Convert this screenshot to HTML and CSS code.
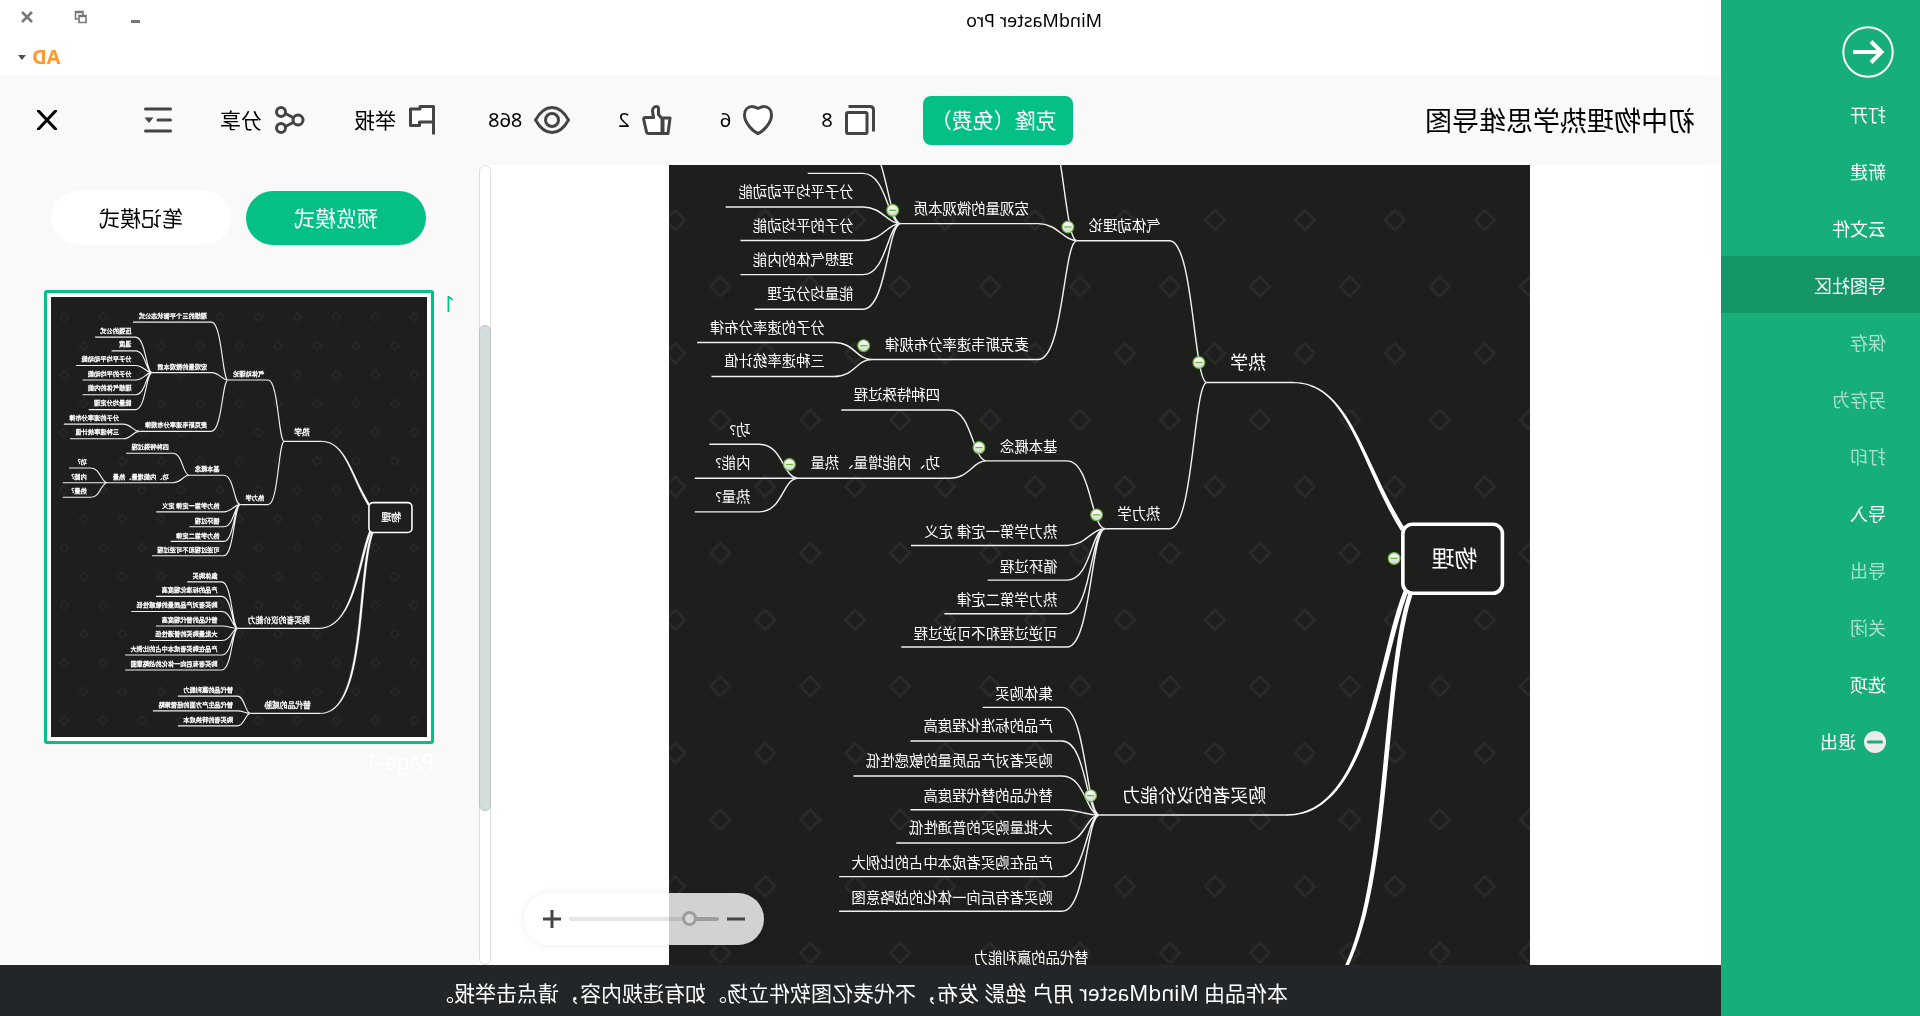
FILE: index.html
```html
<!DOCTYPE html>
<html lang="zh-CN">
<head>
<meta charset="utf-8">
<meta name="viewport" content="width=device-width, initial-scale=1">
<title>MindMaster Pro</title>
<link rel="stylesheet" href="styles.css">
</head>
<body>
<nav class="sidebar">
  <button class="back" type="button" aria-label="返回">
    <svg viewBox="0 0 52 52"><circle cx="26" cy="26" r="24.7"/><path class="arrow" d="M41 26H12M23 15.500L12.500 26L23 36.500"/></svg>
  </button>
  <ul class="menu">
    <li><a class="menu-item" href="#open">打开</a></li>
    <li><a class="menu-item" href="#new">新建</a></li>
    <li><a class="menu-item" href="#cloud">云文件</a></li>
    <li><a class="menu-item active" href="#community">导图社区</a></li>
    <li><a class="menu-item muted" href="#save">保存</a></li>
    <li><a class="menu-item muted" href="#saveas">另存为</a></li>
    <li><a class="menu-item muted" href="#print">打印</a></li>
    <li><a class="menu-item" href="#import">导入</a></li>
    <li><a class="menu-item muted" href="#export">导出</a></li>
    <li><a class="menu-item muted" href="#close">关闭</a></li>
    <li><a class="menu-item" href="#options">选项</a></li>
    <li><a class="menu-item" href="#exit"><svg class="exit-icon" viewBox="0 0 22 22"><circle cx="11" cy="11" r="11"/><path d="M4.500 11h13"/></svg>退出</a></li>
  </ul>
</nav>

<div class="main">
  <header class="titlebar">
    <h1 class="app-title">MindMaster Pro</h1>
    <div class="window-side">
      <div class="window-buttons">
        <button type="button" aria-label="最小化"><svg viewBox="0 0 14 14"><path d="M2 11.500h9" stroke-width="3"/></svg></button>
        <button type="button" aria-label="还原"><svg viewBox="0 0 14 14"><path d="M2 5.500h7v7h-7zM2 6.500h7M5 5V1.500h7.500V9H10M5 2.500h7" stroke-width="1.600"/></svg></button>
        <button type="button" aria-label="关闭窗口"><svg viewBox="0 0 14 14"><path d="M2 2l10 10M12 2L2 12" stroke-width="2.600"/></svg></button>
      </div>
      <button class="account" type="button">AD<svg viewBox="0 0 8 5"><path d="M0 0h8L4 5z"/></svg></button>
    </div>
  </header>

  <section class="toolbar">
    <h2 class="doc-title">初中物理热学思维导图</h2>
    <button class="clone" type="button">克隆（免费）</button>
    <button class="tool" type="button" aria-label="克隆数"><svg class="ic-30" viewBox="0 0 30 30"><rect class="paper" x="8" y="7.500" width="20.500" height="21" rx="1.500"/><path d="M26.500 1.500H5Q1.500 1.500 1.500 5V26.500"/></svg>8</button>
    <button class="tool" type="button" aria-label="喜欢"><svg class="ic-30" viewBox="0 0 30 30"><path class="paper" d="M15 28.500C10 26.500 1.500 18 1.500 10C1.500 4.500 5 1.500 9 1.500c2.500 0 4.500 1.200 6 2c1.500-.8 3.500-2 6-2c4 0 7.500 3 7.500 8.500C28.500 18 20 26.500 15 28.500z"/></svg>6</button>
    <button class="tool" type="button" aria-label="点赞"><svg class="ic-30" viewBox="0 0 30 30"><path class="paper" d="M10 13.500L13.500 9.500V4Q13.500 1.500 15.700 1.500C18 1.500 19.500 4 19.500 6L18.500 12.500H27Q28.700 12.700 28.300 14.500L25.500 27Q25 28.500 23.500 28.500H10zM2 13h7v15.500H4z"/></svg>2</button>
    <button class="tool" type="button" aria-label="浏览"><svg class="ic-36" viewBox="0 0 36 28"><path d="M1.500 14C6 6 11 1.500 18 1.500S30 6 34.500 14C30 22 25 26.500 18 26.500S6 22 1.500 14z"/><circle cx="18" cy="14" r="6.500"/></svg>868</button>
    <button class="tool named" type="button"><svg class="ic-32" viewBox="0 0 32 30"><path class="paper" d="M6.500 29.500V1.500H20V4H29.500V20.500H20.500V17H6.500"/></svg>举报</button>
    <button class="tool named" type="button"><svg class="ic-32" viewBox="0 0 32 28"><path d="M12 12L20.500 7.500M12 16L20.500 20.500"/><circle cx="8" cy="14" r="5"/><circle cx="25" cy="6" r="4.500"/><circle cx="25" cy="22" r="4.500"/></svg>分享</button>
    <button class="tool outline" type="button" aria-label="大纲"><svg class="ic-28" viewBox="0 0 28 28"><path d="M1.500 3h25M1.500 14H14M1.500 25h25"/><path class="solid" d="M18.500 11.500h9L23 17z"/></svg></button>
    <button class="tool close" type="button" aria-label="关闭"><svg class="ic-20" viewBox="0 0 20 20"><path d="M1.500 1l17 18M18.500 1l-17 18"/></svg></button>
  </section>

  <div class="workspace">
    <div class="stage">
      <svg class="map" viewBox="0 0 718 667" preserveAspectRatio="xMinYMin slice" role="img" aria-label="初中物理热学思维导图">
        <defs>
          <pattern id="dots" patternUnits="userSpaceOnUse" x="-281" y="-93" width="75" height="111.100"><path class="dot" d="M18.700 19.600l8.200 8.200l-8.200 8.200l-8.200-8.200zM56.200 75.100l8.200 8.200l-8.200 8.200l-8.200-8.200z"/></pattern>
          <pattern id="dots-small" patternUnits="userSpaceOnUse" x="0" y="-86" width="75" height="111.100"><path class="dot" d="M18.700 19.600l8.200 8.200l-8.200 8.200l-8.200-8.200zM56.200 75.100l8.200 8.200l-8.200 8.200l-8.200-8.200z"/></pattern>
          <linearGradient id="knob" x1="0" y1="0" x2="0" y2="1"><stop offset="0" stop-color="#fff"/><stop offset="1" stop-color="#cfdcc9"/></linearGradient>
          <g id="toggle"><circle r="4.900"/><path d="M-3 0h6"/></g>
          <g id="tree">
            <g class="trunk">
              <path d="M104.300 303C138.800 249.400 149.500 180.900 197.200 180.900V182C151 182 141.500 251 107.700 305z"/>
              <path d="M101.300 355C124 413 133.800 542.500 202.800 542.500V541.300C136.200 541.300 128 411 105.400 355z"/>
              <path d="M96.800 355C128 440 108 706.500 200 706.500V705.400C113 705.400 131.500 440 100.700 355z"/>
            </g>
            <rect class="root" x="23" y="299.500" width="83" height="57.500" rx="8"/>
            <g class="branch">
              <path d="M197 181.400H269.400M202 541.900H358.900M200 706H334.400"/>
              <path d="M269.400 181.400C280.500 181.400 280.500 63.100 300.500 63.100H377.800M269.400 181.400C280.500 181.400 280.500 303.300 300.500 303.300H354.200"/>
              <path d="M377.800 63.100C389 63.100 389-48.500 410-48.500H561M377.800 63.100C389 63.100 394 48.900 410 48.900H524.400M377.800 63.100C389 63.100 389 162.200 410 162.200H548.600"/>
              <path d="M524.400 48.900C536 48.900 536-19.500 556.400-19.500H634M524.400 48.900C536 48.900 536 7 556.400 7H602.200M524.400 48.900C536 48.900 540 35 556.400 35H670.600M524.400 48.900C536 48.900 540 63 556.400 63H658.300M524.400 48.900C536 48.900 536 91.400 556.400 91.400H658.300M524.400 48.900C536 48.900 536 120.300 556.400 120.300H646.400"/>
              <path d="M548.600 162.200C562 162.200 563 148 580.600 148H694.400M548.600 162.200C562 162.200 563 176.400 580.600 176.400H682.500"/>
              <path d="M354.200 303.300C366 303.300 366 246.700 386.100 246.700H452.800M354.200 303.300C366 303.300 370 317.200 386.100 317.200H516.100M354.200 303.300C366 303.300 366 346.100 386.100 346.100H452.200M354.200 303.300C366 303.300 366 374.200 386.100 374.200H488.300M354.200 303.300C366 303.300 366 401.900 386.100 401.900H524.200"/>
              <path d="M452.800 246.700C465 246.700 465 204.200 484.200 204.200H574.200M452.800 246.700C465 246.700 467 261.100 484.200 261.100H696.400M610.300 261.100C623 261.100 623 232.800 642.500 232.800H684.200M610.300 261.100C623 261.100 623 289.200 642.500 289.200H696.400"/>
              <path d="M358.900 541.900C370 541.900 370 452.200 390 452.200H456.300M358.900 541.900C370 541.900 370 480.300 390 480.300H516.500M358.900 541.900C370 541.900 371 509.400 390 509.400H564M358.900 541.900C373 541.900 375 537.500 390 537.500H516.500M358.900 541.900C370 541.900 371 565.300 390 565.300H528.400M358.900 541.900C370 541.900 370 593.300 390 593.300H576M358.900 541.900C370 541.900 370 622.200 390 622.200H576"/>
              <path d="M334.400 706C345 706 345 672.500 360 672.500H474.300M334.400 706C345 706 347 701 360 701H522.600M334.400 706C345 706 345 730 360 730H474.300"/>
            </g>
            <text class="t-root" x="44" y="335">物理</text>
            <g class="t-main">
              <text x="220" y="170">热学</text>
              <text x="220" y="531">购买者的议价能力</text>
              <text x="218" y="695">替代品的威胁</text>
            </g>
            <g class="t-sub">
              <text x="308" y="55">气体动理论</text>
              <text x="308" y="295">热力学</text>
              <text x="418" y="-56">理想的三个平衡状态公式</text>
              <text x="418" y="41">宏观量的微观本质</text>
              <text x="418" y="154">麦克斯韦速率分布规律</text>
              <text x="564" y="-27">压强的公式</text>
              <text x="564" y="-2">温度</text>
              <text x="564" y="27">分子平均平动动能</text>
              <text x="564" y="55">分子的平均动能</text>
              <text x="564" y="83">理想气体的内能</text>
              <text x="564" y="112">能量均分定理</text>
              <text x="588" y="140">分子的速率分布律</text>
              <text x="588" y="168">三种速率统计值</text>
              <text x="394" y="239">基本概念</text>
              <text x="492" y="196">四种特殊过程</text>
              <text x="492" y="253">功、内能增量、热量</text>
              <text x="650" y="225">功?</text>
              <text x="650" y="253">内能?</text>
              <text x="650" y="281">热量?</text>
              <text x="394" y="310">热力学第一定律 定义</text>
              <text x="394" y="339">循环过程</text>
              <text x="394" y="367">热力学第二定律</text>
              <text x="394" y="395">可逆过程和不可逆过程</text>
              <text x="398" y="445">集体购买</text>
              <text x="398" y="472">产品的标准化程度高</text>
              <text x="398" y="501">购买者对产品质量的敏感性低</text>
              <text x="398" y="530">替代品的替代程度高</text>
              <text x="398" y="557">大批量购买的普通性低</text>
              <text x="398" y="586">产品在购买者成本中占的比例大</text>
              <text x="398" y="615">购买者有后向一体化的战略意图</text>
              <text x="368" y="665">替代品的赢利能力</text>
              <text x="368" y="693">替代品生产方面的经营策略</text>
              <text x="368" y="722">购买者的转换成本</text>
            </g>
          </g>
        </defs>
        <rect class="ground" width="100%" height="100%"/>
        <rect fill="url(#dots)" width="100%" height="100%"/>
        <use href="#tree"/>
        <g class="toggles">
          <use href="#toggle" x="113.300" y="328"/>
          <use href="#toggle" x="276.100" y="164.700"/>
          <use href="#toggle" x="385.300" y="51.700"/>
          <use href="#toggle" x="361.400" y="291.700"/>
          <use href="#toggle" x="531.400" y="37.800"/>
          <use href="#toggle" x="555.600" y="150.600"/>
          <use href="#toggle" x="459.400" y="235.600"/>
          <use href="#toggle" x="617.500" y="249.700"/>
          <use href="#toggle" x="366.400" y="525.800"/>
        </g>
      </svg>
      <div class="zoom">
        <button type="button" aria-label="缩小"><svg viewBox="0 0 18 18"><path d="M0 9h18"/></svg></button>
        <input class="zoom-range" type="range" min="0" max="100" value="16" aria-label="缩放">
        <button type="button" aria-label="放大"><svg viewBox="0 0 18 18"><path d="M0 9h18M9 0v18"/></svg></button>
      </div>
    </div>
    <div class="scrollbar"><div class="scroll-thumb"></div></div>
    <aside class="pages">
      <div class="modes">
        <button class="mode selected" type="button">预览模式</button>
        <button class="mode" type="button">笔记模式</button>
      </div>
      <div class="page-entry">
        <span class="page-number">1</span>
        <figure class="page">
          <a class="thumb" href="#page-1" aria-label="Page-1">
            <svg viewBox="-6 -97 725 849">
              <rect class="ground" x="-6" y="-97" width="725" height="849"/>
              <rect fill="url(#dots-small)" x="-6" y="-97" width="725" height="849"/>
              <use href="#tree"/>
            </svg>
          </a>
          <figcaption class="page-name">Page-1</figcaption>
        </figure>
      </div>
    </aside>
  </div>

  <footer class="notice">本作品由 MindMaster 用户 绝影 发布，不代表亿图软件立场。如有违规内容，请点击举报。</footer>
</div>
</body>
</html>
```
FILE: styles.css
```css
* {
  box-sizing: border-box;
}

/* The whole interface is shown as a mirror view. */
body {
  display: flex;
  height: 100vh;
  margin: 0;
  overflow: hidden;
  background: #fff;
  color: #000;
  font: 21px/28px "Noto Sans", "Noto Sans CJK SC", sans-serif;
  transform: scaleX(-1);
}

button {
  padding: 0;
  border: 0;
  background: none;
  color: inherit;
  font: inherit;
}

svg {
  display: block;
  flex: none;
}

h1,
h2,
figure {
  margin: 0;
  font-weight: 400;
}

/* Sidebar */
.sidebar {
  flex: none;
  width: 199px;
  padding-top: 26px;
  background: #16af79;
  color: #fff;
}

.back {
  display: block;
  width: 52px;
  height: 52px;
  margin-left: 26px;
}

.back svg {
  fill: none;
  stroke: #fff;
  stroke-width: 2;
}

.back .arrow {
  stroke-width: 4;
}

.menu {
  margin: 7px 0 0;
  padding: 0;
  list-style: none;
}

.menu-item {
  display: flex;
  align-items: center;
  gap: 8px;
  height: 57px;
  padding: 2px 34px 0;
  color: #fff;
  font-size: 18px;
  text-decoration: none;
}

.menu-item.active {
  background: #149667;
}

.menu-item.muted {
  color: #a8e0cb;
}

.exit-icon {
  width: 22px;
  height: 22px;
  fill: #ececec;
  stroke: none;
}

.exit-icon path {
  stroke: #16af79;
  stroke-width: 3;
  stroke-linecap: round;
}

/* Main column */
.main {
  display: flex;
  flex: 1;
  flex-direction: column;
  min-width: 0;
}

.titlebar {
  display: flex;
  justify-content: space-between;
  height: 75px;
  padding: 6px 20px 0 619px;
}

.app-title {
  font-size: 18px;
}

.window-side {
  display: flex;
  flex-direction: column;
  align-items: flex-end;
  gap: 16px;
}

.window-buttons {
  display: flex;
  gap: 40px;
  height: 21px;
  align-items: center;
}

.window-buttons svg {
  width: 14px;
  height: 14px;
  fill: none;
  stroke: #777;
}

.account {
  display: flex;
  align-items: center;
  gap: 6px;
  margin-right: -2px;
  color: #ff9a30;
  font-size: 20px;
  font-weight: 700;
}

.account svg {
  width: 8px;
  height: 5px;
  fill: #4a5060;
}

/* Toolbar */
.toolbar {
  display: flex;
  align-items: center;
  gap: 48px;
  height: 90px;
  padding: 0 37px 0 26px;
  background: #f9f9f9;
}

.doc-title {
  flex: 1;
  padding-top: 2px;
  font-size: 27px;
  line-height: 36px;
  white-space: nowrap;
}

.clone {
  width: 150px;
  height: 49px;
  padding-left: 8px;
  border-radius: 8px;
  background: #04bf86;
  color: #fff;
  white-space: nowrap;
}

.tool {
  display: flex;
  align-items: center;
  gap: 12px;
  font-size: 20px;
  white-space: nowrap;
}

.tool.named {
  font-size: 21px;
}

.tool svg {
  fill: none;
  stroke: #444;
  stroke-width: 3;
  stroke-linejoin: round;
}

.tool .paper {
  fill: #fff;
}

.tool .solid {
  fill: #444;
  stroke: none;
}

.ic-30 {
  width: 30px;
  height: 30px;
}

.ic-36 {
  width: 36px;
  height: 28px;
}

.ic-32 {
  width: 32px;
}

.ic-28 {
  width: 28px;
  height: 28px;
}

.ic-20 {
  width: 20px;
  height: 20px;
}

.outline svg,
.close svg {
  stroke-linecap: round;
}

.close {
  margin-left: 39px;
}

.tool.close svg {
  stroke: #000;
}

/* Canvas */
.workspace {
  display: flex;
  flex: 1;
  min-height: 0;
}

.stage {
  position: relative;
  flex: 1;
  min-width: 0;
  padding-left: 191px;
}

.map {
  width: 861px;
  height: 100%;
  --line: 1.2;
  --ink: 0;
}

.ground {
  fill: #1e1e1c;
}

.dot {
  fill: none;
  stroke: #2b2b2a;
  stroke-width: 2;
}

.trunk,
.t-root,
.t-main,
.t-sub {
  fill: #fff;
  stroke: #fff;
  stroke-width: var(--ink);
}

.root {
  fill: #1e1e1c;
  stroke: #fff;
  stroke-width: 3;
}

.branch {
  fill: none;
  stroke: #f0f0f0;
  stroke-width: var(--line);
}

.t-root {
  font-size: 19px;
}

.t-main {
  font-size: 15px;
}

.t-sub {
  font-size: 12px;
}

.toggles {
  fill: url(#knob);
  stroke: #6cb33f;
  stroke-width: 1;
}

.zoom {
  position: absolute;
  right: 33px;
  bottom: 20px;
  display: flex;
  align-items: center;
  gap: 8px;
  height: 52px;
  padding: 0 19px;
  border-radius: 26px;
  background: rgba(255, 255, 255, 0.8);
  box-shadow: 0 0 8px rgba(0, 0, 0, 0.08);
}

.zoom svg {
  width: 18px;
  height: 18px;
  stroke: #444;
  stroke-width: 3;
}

.zoom-range {
  width: 150px;
  height: 16px;
  margin: 0;
  appearance: none;
  background: none;
}

.zoom-range::-webkit-slider-runnable-track {
  height: 4px;
  border-radius: 2px;
  background: linear-gradient(to right, #9c9c9a 20%, rgba(0, 0, 0, 0.1) 20%);
}

.zoom-range::-webkit-slider-thumb {
  width: 15px;
  height: 15px;
  margin-top: -6px;
  appearance: none;
  border: 3px solid #9c9c9a;
  border-radius: 50%;
  background: #d8d8d8;
}

.scrollbar {
  flex: none;
  width: 12px;
  padding-top: 159px;
  border: 1px solid #dedede;
  border-radius: 6px;
  background: #fff;
}

.scroll-thumb {
  height: 76%;
  max-height: 488px;
  margin: 0 -1px;
  border: 1px solid #b9c3c1;
  border-radius: 6px;
  background: #d3dddb;
}

/* Page list */
.pages {
  flex: none;
  width: 479px;
  padding: 26px 44px 0 24px;
  background: #f9f9f9;
}

.modes {
  display: flex;
  gap: 15px;
  margin-left: 29px;
}

.mode {
  width: 180px;
  height: 54px;
  border-radius: 27px;
  background: #fff;
}

.mode.selected {
  background: #04bf86;
  color: #fff;
}

.page-entry {
  display: grid;
  grid-template-columns: 21px 1fr;
  margin-top: 45px;
}

.page-number {
  color: #04bf86;
}

.thumb {
  --line: 2.2;
  --ink: 0.6;
  display: block;
  padding: 4px;
  border: 3px solid #04bf86;
  border-radius: 3px;
  background: #fff;
}

.page-name {
  margin-top: 4px;
  color: #fff;
}

.notice {
  height: 51px;
  padding: 0 20px;
  background: #222628;
  color: #fff;
  line-height: 57px;
  text-align: center;
}
```
